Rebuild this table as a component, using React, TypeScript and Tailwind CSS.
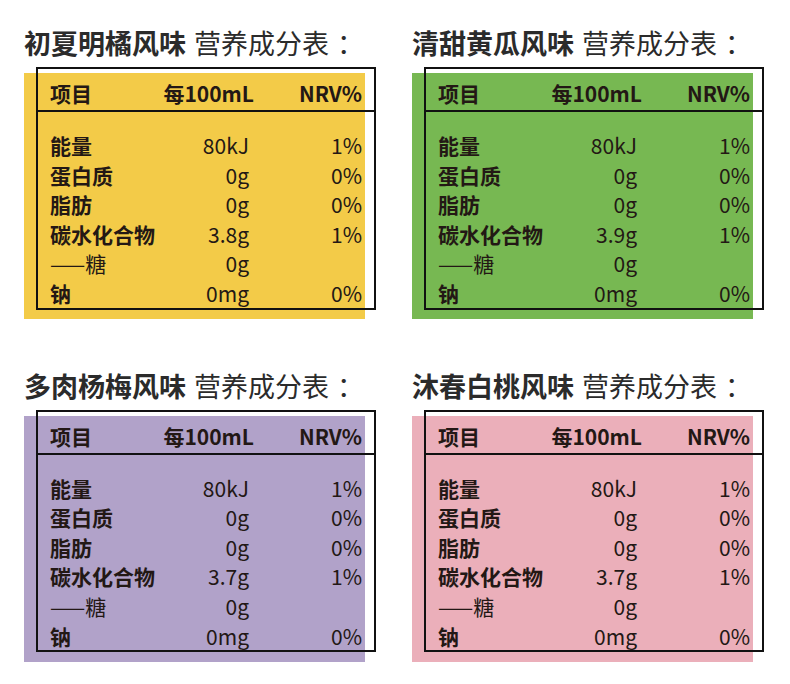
import React from 'react';

/**
 * 四种口味的营养成分表 — 2x2 网格。
 * 每张表：标题 + 彩色底块（错位） + 黑色描边表格。
 */

const FONT = '"Noto Sans CJK SC", "Noto Sans", sans-serif';

type Flavor = {
  name: string;
  fill: string;
  carb: string;
};

const FLAVORS: Flavor[] = [
  { name: '初夏明橘风味', fill: 'bg-[#F3CB48]', carb: '3.8g' },
  { name: '清甜黄瓜风味', fill: 'bg-[#77B852]', carb: '3.9g' },
  { name: '多肉杨梅风味', fill: 'bg-[#B1A2C9]', carb: '3.7g' },
  { name: '沐春白桃风味', fill: 'bg-[#EBAFBA]', carb: '3.7g' },
];

type Row = { label: string; value: string; nrv: string; bold: boolean };

function rowsFor(carb: string): Row[] {
  return [
    { label: '能量', value: '80kJ', nrv: '1%', bold: true },
    { label: '蛋白质', value: '0g', nrv: '0%', bold: true },
    { label: '脂肪', value: '0g', nrv: '0%', bold: true },
    { label: '碳水化合物', value: carb, nrv: '1%', bold: true },
    { label: '——糖', value: '0g', nrv: '', bold: false },
    { label: '钠', value: '0mg', nrv: '0%', bold: true },
  ];
}

function NutritionPanel({ flavor }: { flavor: Flavor }) {
  return (
    <div className="flex flex-col">
      {/* Title */}
      <h2 className="h-[30px] leading-[30px] text-[27px] text-[#2b2b2b] whitespace-nowrap">
        <span className="font-bold">{flavor.name}</span>
        <span className="font-normal ml-[8px]">营养成分表</span>
        <span className="font-normal ml-[8px]">：</span>
      </h2>

      {/* Table with offset colour block behind it */}
      <div className="relative mt-[9px] ml-3 w-[340px]">
        <div className={`absolute -left-3 top-[6px] w-[341px] h-[246px] ${flavor.fill}`} />
        <div className="relative border-2 border-[#111111] text-[#231815]">
          {/* Header */}
          <div className="grid grid-cols-[110px_94px_1fr] items-center h-[43px] pt-[9px] px-3 border-b-2 border-[#111111] text-[21px] font-bold whitespace-nowrap">
            <span>项目</span>
            <span className="text-right">每100mL</span>
            <span className="text-right">NRV%</span>
          </div>

          {/* Body */}
          <div className="pt-[18px] px-3">
            {rowsFor(flavor.carb).map((r) => (
              <div
                key={r.label}
                className="grid grid-cols-[120px_79px_1fr] items-center h-[29.6px] text-[21px] whitespace-nowrap"
              >
                <span className={r.bold ? 'font-bold' : 'font-normal'}>{r.label}</span>
                <span className="text-right">{r.value}</span>
                <span className="text-right">{r.nrv}</span>
              </div>
            ))}
          </div>
        </div>
      </div>
    </div>
  );
}

export default function App() {
  return (
    <div
      className="w-[790px] h-[684px] bg-white pt-[28px] pl-[24px] overflow-hidden"
      style={{ fontFamily: FONT }}
    >
      <div className="grid grid-cols-[388px_388px] gap-y-[61px]">
        {FLAVORS.map((f) => (
          <NutritionPanel key={f.name} flavor={f} />
        ))}
      </div>
    </div>
  );
}
